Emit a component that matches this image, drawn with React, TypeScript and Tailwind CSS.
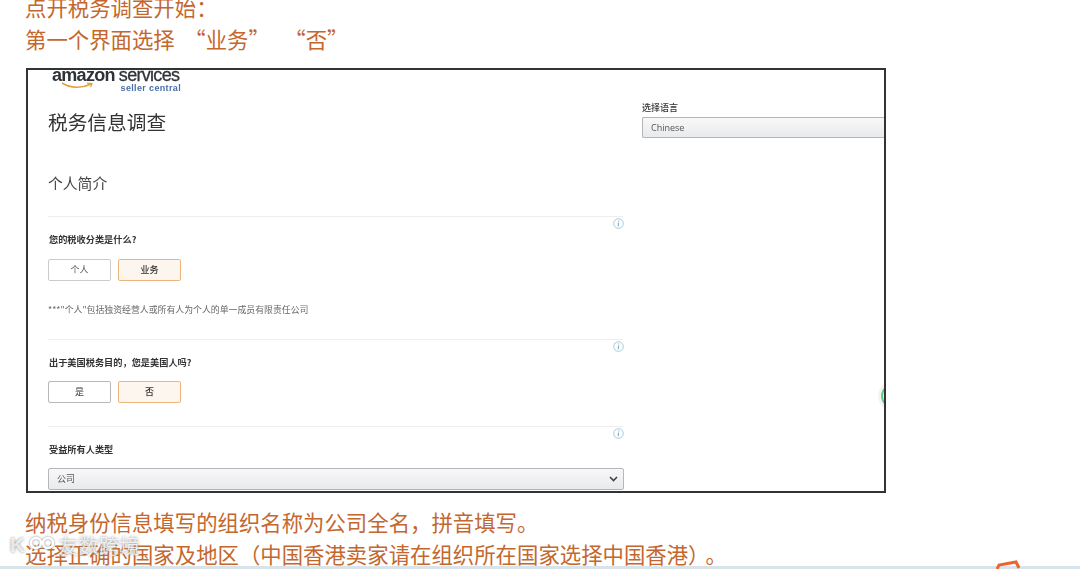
const cjk = "font-['Noto_Sans_CJK_SC','Liberation_Sans',sans-serif] [text-spacing-trim:space-all]"

function InfoIcon() {
  return (
    <svg width="11" height="11" viewBox="0 0 11 11" className="shrink-0">
      <circle cx="5.5" cy="5.5" r="4.8" fill="none" stroke="#9fc3d8" strokeWidth="0.9" />
      <path d="M5.7 2.4v1M5.5 4.6l-.2 3.6" fill="none" stroke="#7fa9c4" strokeWidth="1.1" />
    </svg>
  )
}

function Divider() {
  return (
    <div className="relative h-[16px]">
      <div className="h-px w-[575px] bg-[#eeeeee]" />
      <div className="absolute right-0 top-[2px]">
        <InfoIcon />
      </div>
    </div>
  )
}

function Choice({ left, right, strongLeft }: { left: string; right: string; strongLeft?: boolean }) {
  return (
    <div className="flex gap-[7px]">
      <div
        className={`flex h-[22px] w-[63px] items-center justify-center rounded-[2px] border bg-white text-[9px] ${
          strongLeft ? 'border-[#b5b7ba] text-[#333333]' : 'border-[#c9cbce] text-[#555555]'
        }`}
      >
        {left}
      </div>
      <div className="flex h-[22px] w-[63px] items-center justify-center rounded-[2px] border border-[#eeb47a] bg-[#fdf6ef] text-[9px] font-medium text-[#333333]">
        {right}
      </div>
    </div>
  )
}

function Logo() {
  return (
    <div className="relative ml-[24px] h-[26px] w-[132px] overflow-hidden">
      <div className="-mt-[5px] flex items-baseline font-['Liberation_Sans',sans-serif] text-[18px] leading-[20px] tracking-[-0.7px] text-[#2f3338]">
        <span className="font-bold">amazon</span>
        <span className="ml-[4px] [-webkit-text-stroke:0.3px_#2f3338]">services</span>
      </div>
      <svg width="36" height="9" viewBox="0 0 36 9" className="absolute left-[9px] top-[12px]">
        <path d="M1 1C10 6.5 21 6.5 30 2" fill="none" stroke="#e0a040" strokeWidth="1.6" />
        <path d="M26 1.2l5 .3-1.4 3.6" fill="none" stroke="#e0a040" strokeWidth="1.2" />
      </svg>
      <div className="absolute right-[3px] top-[13px] font-['Liberation_Sans',sans-serif] text-[9px] font-bold leading-[10px] tracking-[0.35px] text-[#4a6ea8]">
        seller central
      </div>
    </div>
  )
}

export default function App() {
  return (
    <div className={`relative isolate h-[569px] w-[1080px] overflow-hidden bg-white ${cjk}`}>
      <div className="-mt-[9px] pl-[25px] text-[21.4px] leading-[32px] text-[#c4672f]">
        <div>点开税务调查开始：</div>
        <div className="whitespace-pre">第一个界面选择  “业务”   “否”</div>
      </div>

      <div className="ml-[26px] mt-[13px] w-[860px]">
        <div className="relative flex h-[425px] overflow-hidden border-2 border-[#333333] bg-white">
          <div className="w-[597px] shrink-0 blur-[0.4px]">
            <Logo />
            <div className="ml-[20px] w-[576px]">
              <h1 className="mt-[12px] text-[19.7px] leading-[28px] text-[#333333]">税务信息调查</h1>
              <h2 className="mt-[36px] text-[14.8px] leading-[22px] text-[#444444]">个人简介</h2>
              <div className="mt-[22px]">
                <Divider />
              </div>
              <div className="ml-[1px] text-[9.2px] font-bold leading-[14px] text-[#333333]">
                您的税收分类是什么?
              </div>
              <div className="mt-[13px]">
                <Choice left="个人" right="业务" />
              </div>
              <div className="mt-[22px] text-[8.9px] leading-[14px] text-[#666666]">
                ***"个人"包括独资经营人或所有人为个人的单一成员有限责任公司
              </div>
              <div className="mt-[22px]">
                <Divider />
              </div>
              <div className="ml-[1px] text-[9.2px] font-bold leading-[14px] text-[#333333]">
                出于美国税务目的，您是美国人吗?
              </div>
              <div className="mt-[12px]">
                <Choice left="是" right="否" strongLeft />
              </div>
              <div className="mt-[23px]">
                <Divider />
              </div>
              <div className="ml-[1px] text-[9.2px] font-bold leading-[14px] text-[#333333]">
                受益所有人类型
              </div>
              <div className="mt-[12px] flex h-[22px] items-center justify-between rounded-[2px] border border-[#b4b6b9] bg-gradient-to-b from-[#f8f8f9] to-[#e9eaec] pl-[8px] pr-[5px] text-[9px] text-[#555555]">
                <span>公司</span>
                <svg width="9" height="6" viewBox="0 0 9 6">
                  <path d="M1 1l3.5 3.5L8 1" fill="none" stroke="#444444" strokeWidth="1.6" />
                </svg>
              </div>
            </div>
          </div>

          <div className="ml-[17px] flex-1 pt-[31px] blur-[0.4px]">
            <div className="text-[9px] font-medium leading-[14px] text-[#333333]">选择语言</div>
            <div className="mt-[2px] flex h-[21px] items-center rounded-l-[2px] border border-r-0 border-[#b4b6b9] bg-gradient-to-b from-[#f8f8f9] to-[#e9eaec] pl-[8px] font-['Open_Sans',sans-serif] text-[9px] text-[#555555]">
              Chinese
            </div>
          </div>

          {/* floating widget, mostly cut off by the frame */}
          <div className="absolute left-[853px] top-[314px] size-[24px] rounded-full border-2 border-[#5fcf85] bg-white shadow-[0_0_0_3px_#f4f4f4] blur-[0.4px]" />
        </div>
      </div>

      <div className="mt-[13px] pl-[25px] text-[21.4px] leading-[32px] text-[#c4672f]">
        <div>纳税身份信息填写的组织名称为公司全名，拼音填写。</div>
        <div className="whitespace-nowrap">
          选择正确的国家及地区（中国香港卖家请在组织所在国家选择中国香港）
          <span className="-ml-[4px]">。</span>
        </div>
      </div>

      {/* site watermark */}
      <div className="absolute left-[10px] top-[532px] flex items-center text-[20.5px] leading-[26px] text-white/75 [text-shadow:0_0_3px_#8a8a8a]">
        <span className="w-[18px] font-['Liberation_Sans',sans-serif] font-bold">K</span>
        <svg
          width="30"
          height="20"
          viewBox="0 0 30 20"
          fill="none"
          stroke="#ffffff"
          strokeWidth="2.5"
          className="drop-shadow-[0_0_1px_#8a8a8a]"
        >
          <circle cx="8" cy="8" r="5" />
          <circle cx="20" cy="8" r="5" />
        </svg>
        <span>友数跨境</span>
      </div>

      <div className="absolute bottom-0 left-0 h-[3px] w-full bg-[#d8e4ea]" />
      <svg width="26" height="10" viewBox="0 0 26 10" className="absolute left-[996px] top-[560px]">
        <path d="M1 9l2-4 17-3 3 6" fill="none" stroke="#f0622d" strokeWidth="3" />
      </svg>
    </div>
  )
}
